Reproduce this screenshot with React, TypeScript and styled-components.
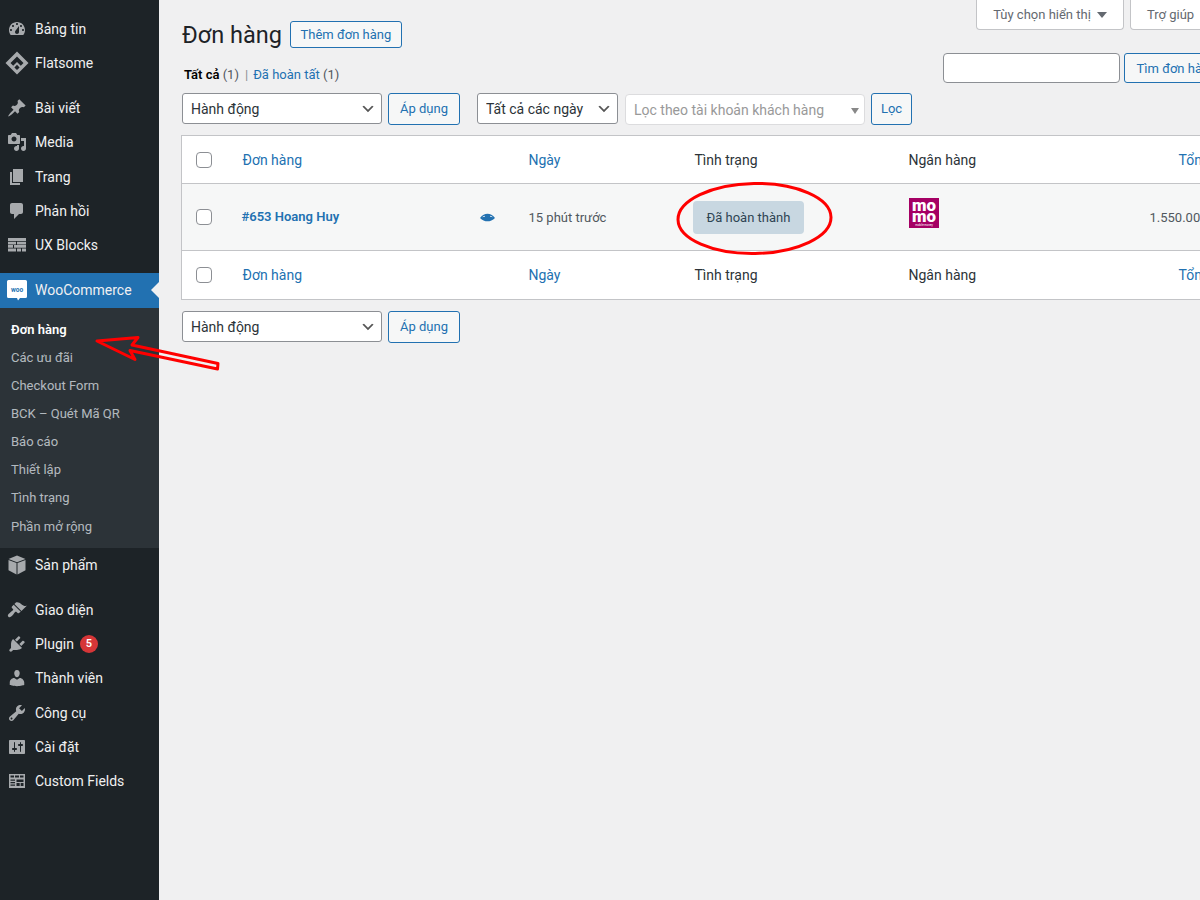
import React from "react";
import styled, { createGlobalStyle } from "styled-components";

const CHEVRON =
  "url(\"data:image/svg+xml,%3Csvg xmlns='http://www.w3.org/2000/svg' width='20' height='20'%3E%3Cpath d='M5 6l5 5 5-5 2 1-7 7-7-7 2-1z' fill='%23555'/%3E%3C/svg%3E\")";

const GlobalStyle = createGlobalStyle`
  html, body {
    margin: 0;
    padding: 0;
    height: 100%;
    overflow: hidden;
    background: #f0f0f1;
    font-family: Roboto, "Noto Sans", sans-serif;
    font-size: 13px;
    color: #3c434a;
  }
  * {
    box-sizing: border-box;
  }
`;

const Page = styled.div`
  position: relative;
  display: flex;
  width: 1200px;
  height: 900px;
  overflow: hidden;
`;

const Sidebar = styled.nav`
  flex: 0 0 159px;
  background: #1d2327;
  padding-top: 12px;
`;

const MenuItem = styled.div<{ $active?: boolean }>`
  position: relative;
  display: flex;
  align-items: center;
  height: ${(p) => (p.$active ? 35 : 34.3)}px;
  padding-left: 35px;
  font-size: 14px;
  color: #f0f0f1;
  background: ${(p) => (p.$active ? "#2271b1" : "transparent")};

  ${(p) =>
    p.$active &&
    `
    &::after {
      content: "";
      position: absolute;
      right: 0;
      top: 50%;
      margin-top: -8px;
      border: 8px solid transparent;
      border-right-color: #f0f0f1;
    }
  `}
`;

const MenuIcon = styled.svg<{ $light?: boolean }>`
  position: absolute;
  left: 7px;
  top: 50%;
  width: 20px;
  height: 20px;
  margin-top: -10px;
  overflow: visible;
  fill: ${(p) => (p.$light ? "#fff" : "#a7aaad")};
`;

const Separator = styled.div`
  height: 10.4px;
`;

const Submenu = styled.div`
  background: #2c3338;
  padding: 8px 0 7.2px 11px;
`;

const SubItem = styled.div<{ $current?: boolean }>`
  height: 28.1px;
  line-height: 28px;
  font-size: 13px;
  font-weight: ${(p) => (p.$current ? 600 : 400)};
  color: ${(p) => (p.$current ? "#fff" : "rgba(240, 246, 252, 0.7)")};
`;

const Badge = styled.span`
  display: inline-block;
  width: 18px;
  height: 18px;
  margin-left: 6px;
  border-radius: 50%;
  background: #d63638;
  color: #fff;
  font-size: 11px;
  font-weight: 600;
  line-height: 18px;
  text-align: center;
`;

const Content = styled.main`
  flex: 0 0 1100px;
  padding-left: 23px;
`;

const TopGrid = styled.div`
  display: grid;
  grid-template-columns: 761px 316px;
  height: 93px;
`;

const TitleBlock = styled.div`
  padding-top: 21px;
`;

const TitleRow = styled.div`
  display: flex;
  align-items: flex-start;
  gap: 8px;
`;

const Title = styled.h1`
  margin: 0;
  padding-top: 1px;
  font-size: 23.5px;
  font-weight: 400;
  line-height: 27px;
  color: #1d2327;
`;

const ViewLinks = styled.div`
  margin: 16px 0 0 2px;
  line-height: 20px;
  color: #50575e;
`;

const CurrentLink = styled.b`
  font-weight: 600;
  color: #000;
`;

const ViewSep = styled.span`
  margin: 0 5px 0 6px;
  color: #8c8f94;
`;

const BlueLink = styled.span`
  color: #2271b1;
`;

const RightBlock = styled.div`
  display: flex;
  flex-direction: column;
`;

const MetaTabs = styled.div`
  display: flex;
  gap: 6px;
  margin-left: 33px;
`;

const MetaTab = styled.div<{ $wide?: boolean }>`
  display: flex;
  flex: none;
  align-items: center;
  justify-content: ${(p) => (p.$wide ? "center" : "flex-start")};
  gap: 6px;
  width: ${(p) => (p.$wide ? 148 : 120)}px;
  height: 30px;
  padding-left: ${(p) => (p.$wide ? 0 : 16)}px;
  background: #fff;
  border: 1px solid #c3c4c7;
  border-top: 0;
  border-radius: 0 0 4px 4px;
  color: #646970;
`;

const MetaCaret = styled.span`
  width: 0;
  height: 0;
  border: 5px solid transparent;
  border-top: 6px solid #646970;
  border-bottom: 0;
`;

const SearchRow = styled.div`
  display: flex;
  gap: 4px;
  margin-top: 23px;
`;

const SearchInput = styled.input`
  flex: none;
  width: 177px;
  height: 30px;
  border: 1px solid #8c8f94;
  border-radius: 4px;
  background: #fff;
`;

const Button = styled.button<{ $width: number; $height?: number; $left?: number }>`
  flex: none;
  width: ${(p) => p.$width}px;
  height: ${(p) => p.$height ?? 32}px;
  margin-left: ${(p) => p.$left ?? 0}px;
  padding: 0;
  border: 1px solid #2271b1;
  border-radius: 3px;
  background: #f6f7f7;
  color: #2271b1;
  font-family: inherit;
  font-size: 13px;
  white-space: nowrap;
`;

const Tablenav = styled.div`
  display: flex;
  align-items: center;
  height: 31px;
`;

const Select = styled.select<{ $width: number; $left?: number }>`
  appearance: none;
  flex: none;
  width: ${(p) => p.$width}px;
  height: 31px;
  margin-left: ${(p) => p.$left ?? 0}px;
  padding: 0 24px 0 8px;
  border: 1px solid #8c8f94;
  border-radius: 3px;
  background: #fff ${CHEVRON} no-repeat right 5px top 55%;
  background-size: 16px 16px;
  color: #2c3338;
  font-family: inherit;
  font-size: 14px;
`;

const FakeSelect = styled.div`
  position: relative;
  flex: none;
  width: 240px;
  height: 31px;
  padding-left: 8px;
  margin: 1px 6px 0 7px;
  line-height: 31px;
  border: 1px solid #dcdcde;
  border-radius: 4px;
  background: #fff;
  color: #999;
  font-size: 14px;

  &::after {
    content: "";
    position: absolute;
    right: 5px;
    top: 13px;
    border: 4px solid transparent;
    border-top: 6px solid #888;
    border-bottom: 0;
  }
`;

const Table = styled.table`
  width: 1100px;
  margin: 11px 0 11px -1px;
  border: 1px solid #c3c4c7;
  border-collapse: collapse;
  table-layout: fixed;
  background: #fff;
  font-size: 14px;
`;

const Th = styled.th<{ $width?: number; $link?: boolean; $inset?: number; $tall?: boolean }>`
  width: ${(p) => (p.$width ? `${p.$width}px` : "auto")};
  height: ${(p) => (p.$tall ? 49 : 48)}px;
  padding: 0 0 0 ${(p) => p.$inset ?? 10}px;
  border-bottom: 1px solid #c3c4c7;
  border-top: 1px solid #c3c4c7;
  text-align: left;
  font-weight: 400;
  color: ${(p) => (p.$link ? "#2271b1" : "#2c3338")};
`;

const Row = styled.tr`
  background: #f6f7f7;
`;

const Td = styled.td<{ $inset?: number }>`
  height: 67px;
  padding: 0 0 0 ${(p) => p.$inset ?? 10}px;
  border-bottom: 1px solid #c3c4c7;
  color: #50575e;
  font-size: 13px;
`;

const OrderCell = styled.div`
  display: flex;
  align-items: center;
  justify-content: space-between;
  padding-right: 24px;
  margin-left: -1px;
`;

const OrderName = styled.strong`
  margin-top: -2px;
  font-weight: 600;
  color: #2271b1;
`;

const EyeIcon = styled.svg`
  width: 15px;
  height: 15px;
  fill: #2271b1;
`;

const CheckCell = styled.div`
  display: flex;
  padding-left: 4px;
`;

const Checkbox = styled.input.attrs({ type: "checkbox" })`
  appearance: none;
  width: 16px;
  height: 16px;
  margin: 0;
  border: 1px solid #8c8f94;
  border-radius: 4px;
  background: #fff;
`;

const Status = styled.mark`
  display: inline-block;
  height: 33px;
  line-height: 33px;
  padding: 0 14px;
  margin: 1px 0 0 -2px;
  border-radius: 4px;
  background: #c8d7e1;
  color: #2e4453;
`;

const MomoLogo = styled.svg`
  display: block;
  width: 30px;
  height: 30px;
  margin-top: -8px;
`;

const Overlay = styled.svg`
  position: absolute;
  left: 0;
  top: 0;
  width: 1200px;
  height: 900px;
  fill: none;
  stroke: #f00;
  pointer-events: none;
`;

type NavEntry = { label: string; icon: React.ReactNode; badge?: number };

const p = (d: string) => <path d={d} fillRule="evenodd" />;

const icons = {
  dashboard: p(
    "M3.76 16h12.48c1.1-1.37 1.76-3.11 1.76-5 0-4.42-3.58-8-8-8s-8 3.58-8 8c0 1.89.66 3.63 1.76 5zM10 4c.55 0 1 .45 1 1s-.45 1-1 1-1-.45-1-1 .45-1 1-1zM6 6c.55 0 1 .45 1 1s-.45 1-1 1-1-.45-1-1 .45-1 1-1zm8 0c.55 0 1 .45 1 1s-.45 1-1 1-1-.45-1-1 .45-1 1-1zm-5.37 5.55L12 7v6c0 1.1-.9 2-2 2s-2-.9-2-2c0-.57.24-1.08.63-1.45zM4 10c.55 0 1 .45 1 1s-.45 1-1 1-1-.45-1-1 .45-1 1-1zm12 0c.55 0 1 .45 1 1s-.45 1-1 1-1-.45-1-1 .45-1 1-1z"
  ),
  flatsome: p(
    "M10-1.500L21.500 10 10 21.500-1.500 10zM10 3.500L3.500 10l2.700 2.700L10 8.900l3.800 3.800 2.700-2.700zM10 11.800l-2.600 2.600 2.600 2.600 2.600-2.600z"
  ),
  pin: p(
    "M10.44 3.02l1.82-1.82 6.36 6.35-1.83 1.82c-1.05-.68-2.48-.57-3.41.36l-.75.75c-.92.93-1.04 2.35-.35 3.41l-1.83 1.82-2.41-2.41-2.8 2.79c-.42.42-3.38 2.71-3.8 2.29s1.86-3.39 2.28-3.81l2.79-2.79L4.1 9.36l1.83-1.82c1.05.69 2.48.57 3.4-.36l.75-.75c.93-.92 1.05-2.35.36-3.41z"
  ),
  media: p(
    "M13 11V4c0-.55-.45-1-1-1h-1.67L9 1H5L3.67 3H2c-.55 0-1 .45-1 1v7c0 .55.45 1 1 1h10c.55 0 1-.45 1-1zM7 4.5c1.38 0 2.5 1.12 2.5 2.5S8.38 9.5 7 9.5 4.5 8.38 4.5 7 5.62 4.5 7 4.5zM14 6h5v10.5c0 1.38-1.12 2.5-2.5 2.5S14 17.88 14 16.5s1.12-2.5 2.5-2.5c.17 0 .34.02.5.05V9h-3V6zm-4 8.05V13h2v3.5c0 1.38-1.12 2.5-2.5 2.5S7 17.88 7 16.5 8.12 14 9.5 14c.17 0 .34.02.5.05z"
  ),
  page: p("M6 15V2h10v13H6zm-1 1h8v2H3V5h2v11z"),
  comment: p(
    "M5 2h9c1.1 0 2 .9 2 2v7c0 1.1-.9 2-2 2h-2l-5 5v-5H5c-1.1 0-2-.9-2-2V4c0-1.1.9-2 2-2z"
  ),
  blocks: p(
    "M1 3h18v3H1zM1 6.700h8v2.700H1zM10 6.700h9v2.700h-9zM1 10.100h5v2.700H1zM7 10.100h12v2.700H7zM1 13.500h8v3H1zM10 13.500h4v3h-4zM15 13.500h4v3h-4z"
  ),
  box: p(
    "M10 .5l8.500 3.400L10 7.300 1.500 3.900zM1.500 4.900l8 3.200v11.400l-8-4.200zM18.500 4.900l-8 3.200v11.400l8-4.200z"
  ),
  brush: p(
    "M14.48 11.06L7.41 3.99l1.5-1.5c.5-.56 2.3-.47 3.51.32 1.21.8 1.43 1.28 2.91 2.1 1.18.64 2.45 1.26 4.45.85zm-.71.71L6.7 4.7 4.93 6.47c-.39.39-.39 1.02 0 1.41l1.06 1.06c.39.39.39 1.03 0 1.42-.6.6-1.43 1.11-2.21 1.69-.35.26-.7.53-1.01.84C1.43 13.71.05 15.33 1.36 16.64c1.34 1.32 2.97-.05 4.23-1.41.31-.31.58-.66.84-1.01.58-.78 1.09-1.61 1.69-2.21.39-.39 1.02-.39 1.41 0l1.06 1.06c.39.39 1.02.39 1.41 0z"
  ),
  plug: p(
    "M13.11 4.36L9.87 7.6 8 5.73l3.24-3.24c.35-.34 1.05-.2 1.56.32.52.51.66 1.21.31 1.55zm-8 1.77l.91-1.12 9.01 9.01-1.19.84c-.71.71-2.63 1.16-3.82 1.16H6.14L4.9 17.26c-.59.59-1.54.59-2.12 0-.59-.58-.59-1.53 0-2.12l1.24-1.24v-3.88c0-1.13.4-3.19 1.09-3.89zm7.26 3.97l3.24-3.24c.34-.35 1.04-.21 1.55.31.52.51.66 1.21.31 1.55l-3.24 3.25z"
  ),
  user: p(
    "M10 9.25c-2.27 0-2.73-3.44-2.73-3.44C7 4.02 7.82 2 9.97 2c2.16 0 2.98 2.02 2.71 3.81 0 0-.41 3.44-2.68 3.44zm0 2.57L12.72 10c2.39 0 4.52 2.33 4.52 4.53v2.49s-3.65 1.13-7.24 1.13c-3.65 0-7.24-1.13-7.24-1.13v-2.49c0-2.25 1.94-4.48 4.47-4.48z"
  ),
  wrench: p(
    "M16.68 9.77c-1.34 1.34-3.3 1.67-4.95.99l-5.41 6.52c-.99.99-2.59.99-3.58 0s-.99-2.59 0-3.57l6.52-5.42c-.68-1.65-.35-3.61.99-4.95 1.28-1.28 3.12-1.62 4.72-1.06l-2.89 2.89 2.82 2.82 2.86-2.87c.53 1.58.18 3.39-1.08 4.67zM3.81 16.21c.4.39 1.04.39 1.43 0 .4-.4.4-1.04 0-1.43-.39-.4-1.03-.4-1.43 0-.39.39-.39 1.03 0 1.43z"
  ),
  sliders: p(
    "M18 16V4c0-.55-.45-1-1-1H3c-.55 0-1 .45-1 1v12c0 .55.45 1 1 1h14c.55 0 1-.45 1-1zM8 11h1c.55 0 1 .45 1 1s-.45 1-1 1H8v1.5c0 .28-.22.5-.5.5s-.5-.22-.5-.5V13H6c-.55 0-1-.45-1-1s.45-1 1-1h1V5.5c0-.28.22-.5.5-.5s.5.22.5.5V11zm5-2h-1c-.55 0-1-.45-1-1s.45-1 1-1h1V5.5c0-.28.22-.5.5-.5s.5.22.5.5V7h1c.55 0 1 .45 1 1s-.45 1-1 1h-1v5.5c0 .28-.22.5-.5.5s-.5-.22-.5-.5V9z"
  ),
  fields: p(
    "M2 3h16v14H2zM3.500 4.500v2h3.500v-2zM8 4.500v2h4v-2zM13 4.500v2h3.500v-2zM3.500 8.500v1.300H8V8.500zM3.500 11v1.300H8V11zM3.500 13.500v1.300H8v-1.300zM9.500 8.500v2.500h7V8.500zM9.500 12v3h3.200v-3zM13.700 12v3h2.800v-3z"
  ),
};

const topNav: (NavEntry | null)[] = [
  { label: "Bảng tin", icon: icons.dashboard },
  { label: "Flatsome", icon: icons.flatsome },
  null,
  { label: "Bài viết", icon: icons.pin },
  { label: "Media", icon: icons.media },
  { label: "Trang", icon: icons.page },
  { label: "Phản hồi", icon: icons.comment },
  { label: "UX Blocks", icon: icons.blocks },
  null,
];

const bottomNav: (NavEntry | null)[] = [
  { label: "Sản phẩm", icon: icons.box },
  null,
  { label: "Giao diện", icon: icons.brush },
  { label: "Plugin", icon: icons.plug, badge: 5 },
  { label: "Thành viên", icon: icons.user },
  { label: "Công cụ", icon: icons.wrench },
  { label: "Cài đặt", icon: icons.sliders },
  { label: "Custom Fields", icon: icons.fields },
];

const subNav = [
  "Đơn hàng",
  "Các ưu đãi",
  "Checkout Form",
  "BCK – Quét Mã QR",
  "Báo cáo",
  "Thiết lập",
  "Tình trạng",
  "Phần mở rộng",
];

const renderNav = (items: (NavEntry | null)[]) =>
  items.map((item, i) =>
    item ? (
      <MenuItem key={item.label}>
        <MenuIcon viewBox="0 0 20 20">{item.icon}</MenuIcon>
        {item.label}
        {item.badge ? <Badge>{item.badge}</Badge> : null}
      </MenuItem>
    ) : (
      <Separator key={i} />
    )
  );

const HeaderCells: React.FC<{ tall?: boolean }> = ({ tall }) => (
  <>
    <Th $width={51} $tall={tall}>
      <CheckCell>
        <Checkbox />
      </CheckCell>
    </Th>
    <Th $width={286} $link $tall={tall}>
      Đơn hàng
    </Th>
    <Th $width={166} $link $tall={tall}>
      Ngày
    </Th>
    <Th $width={214} $tall={tall}>
      Tình trạng
    </Th>
    <Th $width={231} $tall={tall}>
      Ngân hàng
    </Th>
    <Th $link $inset={49} $tall={tall}>
      Tổng
    </Th>
  </>
);

export default function App() {
  return (
    <Page>
      <GlobalStyle />
      <Sidebar>
        {renderNav(topNav)}
        <MenuItem $active>
          <MenuIcon viewBox="0 0 20 20" $light>
            <path d="M1.500 0h17A1.500 1.500 0 0 1 20 1.500v15a1.500 1.500 0 0 1-1.500 1.500H13l-2 2.400-1-2.400H1.500A1.500 1.500 0 0 1 0 16.500v-15A1.500 1.500 0 0 1 1.500 0z" />
            <text x="10" y="11.500" textAnchor="middle" fontSize="6.500" fontWeight="700" fill="#2271b1">
              woo
            </text>
          </MenuIcon>
          WooCommerce
        </MenuItem>
        <Submenu>
          {subNav.map((label, i) => (
            <SubItem key={label} $current={i === 0}>
              {label}
            </SubItem>
          ))}
        </Submenu>
        {renderNav(bottomNav)}
      </Sidebar>

      <Content>
        <TopGrid>
          <TitleBlock>
            <TitleRow>
              <Title>Đơn hàng</Title>
              <Button $width={112} $height={27}>
                Thêm đơn hàng
              </Button>
            </TitleRow>
            <ViewLinks>
              <CurrentLink>Tất cả</CurrentLink> (1)
              <ViewSep>|</ViewSep>
              <BlueLink>Đã hoàn tất</BlueLink> (1)
            </ViewLinks>
          </TitleBlock>
          <RightBlock>
            <MetaTabs>
              <MetaTab $wide>
                Tùy chọn hiển thị <MetaCaret />
              </MetaTab>
              <MetaTab>Trợ giúp</MetaTab>
            </MetaTabs>
            <SearchRow>
              <SearchInput />
              <Button $width={105} $height={30}>
                Tìm đơn hàng
              </Button>
            </SearchRow>
          </RightBlock>
        </TopGrid>

        <Tablenav>
          <Select $width={200}>
            <option>Hành động</option>
          </Select>
          <Button $width={72} $left={6}>
            Áp dụng
          </Button>
          <Select $width={141} $left={17}>
            <option>Tất cả các ngày</option>
          </Select>
          <FakeSelect>Lọc theo tài khoản khách hàng</FakeSelect>
          <Button $width={41}>Lọc</Button>
        </Tablenav>

        <Table>
          <thead>
            <tr>
              <HeaderCells />
            </tr>
          </thead>
          <tbody>
            <Row>
              <Td>
                <CheckCell>
                  <Checkbox />
                </CheckCell>
              </Td>
              <Td>
                <OrderCell>
                  <OrderName>#653 Hoang Huy</OrderName>
                  <EyeIcon viewBox="0 0 20 20">
                    <path
                      fillRule="evenodd"
                      d="M0 10.500C3 6.500 6.500 5 10 5s7 1.500 10 5.500c-3 3-6.500 4.500-10 4.500S3 13.500 0 10.500zM2.800 9.600c1.200-.7 2.400-1.300 3.700-1.800-.2.5-.3 1-.3 1.500-1.200 0-2.400.1-3.400.3zM17.200 9.600c-1.200-.7-2.400-1.300-3.700-1.800.2.5.3 1 .3 1.500 1.200 0 2.400.1 3.400.3z"
                    />
                  </EyeIcon>
                </OrderCell>
              </Td>
              <Td>15 phút trước</Td>
              <Td>
                <Status>Đã hoàn thành</Status>
              </Td>
              <Td>
                <MomoLogo viewBox="0 0 30 30">
                  <rect width="30" height="30" fill="#a50064" />
                  <g fill="#fff" fontFamily="Roboto, sans-serif" fontWeight="900" fontSize="16">
                    <text x="3" y="12.500" textLength="24" lengthAdjust="spacingAndGlyphs">
                      mo
                    </text>
                    <text x="3" y="23.500" textLength="24" lengthAdjust="spacingAndGlyphs">
                      mo
                    </text>
                  </g>
                  <text x="15" y="28" fill="#fff" fontSize="2.800" fontFamily="Roboto, sans-serif" textAnchor="middle">
                    mobile money
                  </text>
                </MomoLogo>
              </Td>
              <Td $inset={20}>1.550.000 ₫</Td>
            </Row>
            <tr>
              <HeaderCells tall />
            </tr>
          </tbody>
        </Table>

        <Tablenav>
          <Select $width={200}>
            <option>Hành động</option>
          </Select>
          <Button $width={72} $left={6}>
            Áp dụng
          </Button>
        </Tablenav>
      </Content>

      <Overlay viewBox="0 0 1200 900">
        <ellipse cx="754.500" cy="218.500" rx="76.500" ry="35" strokeWidth="3" transform="rotate(-1 754 218)" />
        <path
          d="M97 341L138 337.500L132 345L218 363.500L217.500 369L130 350.500L135 359.500Z"
          strokeWidth="3"
          strokeLinejoin="round"
        />
      </Overlay>
    </Page>
  );
}
